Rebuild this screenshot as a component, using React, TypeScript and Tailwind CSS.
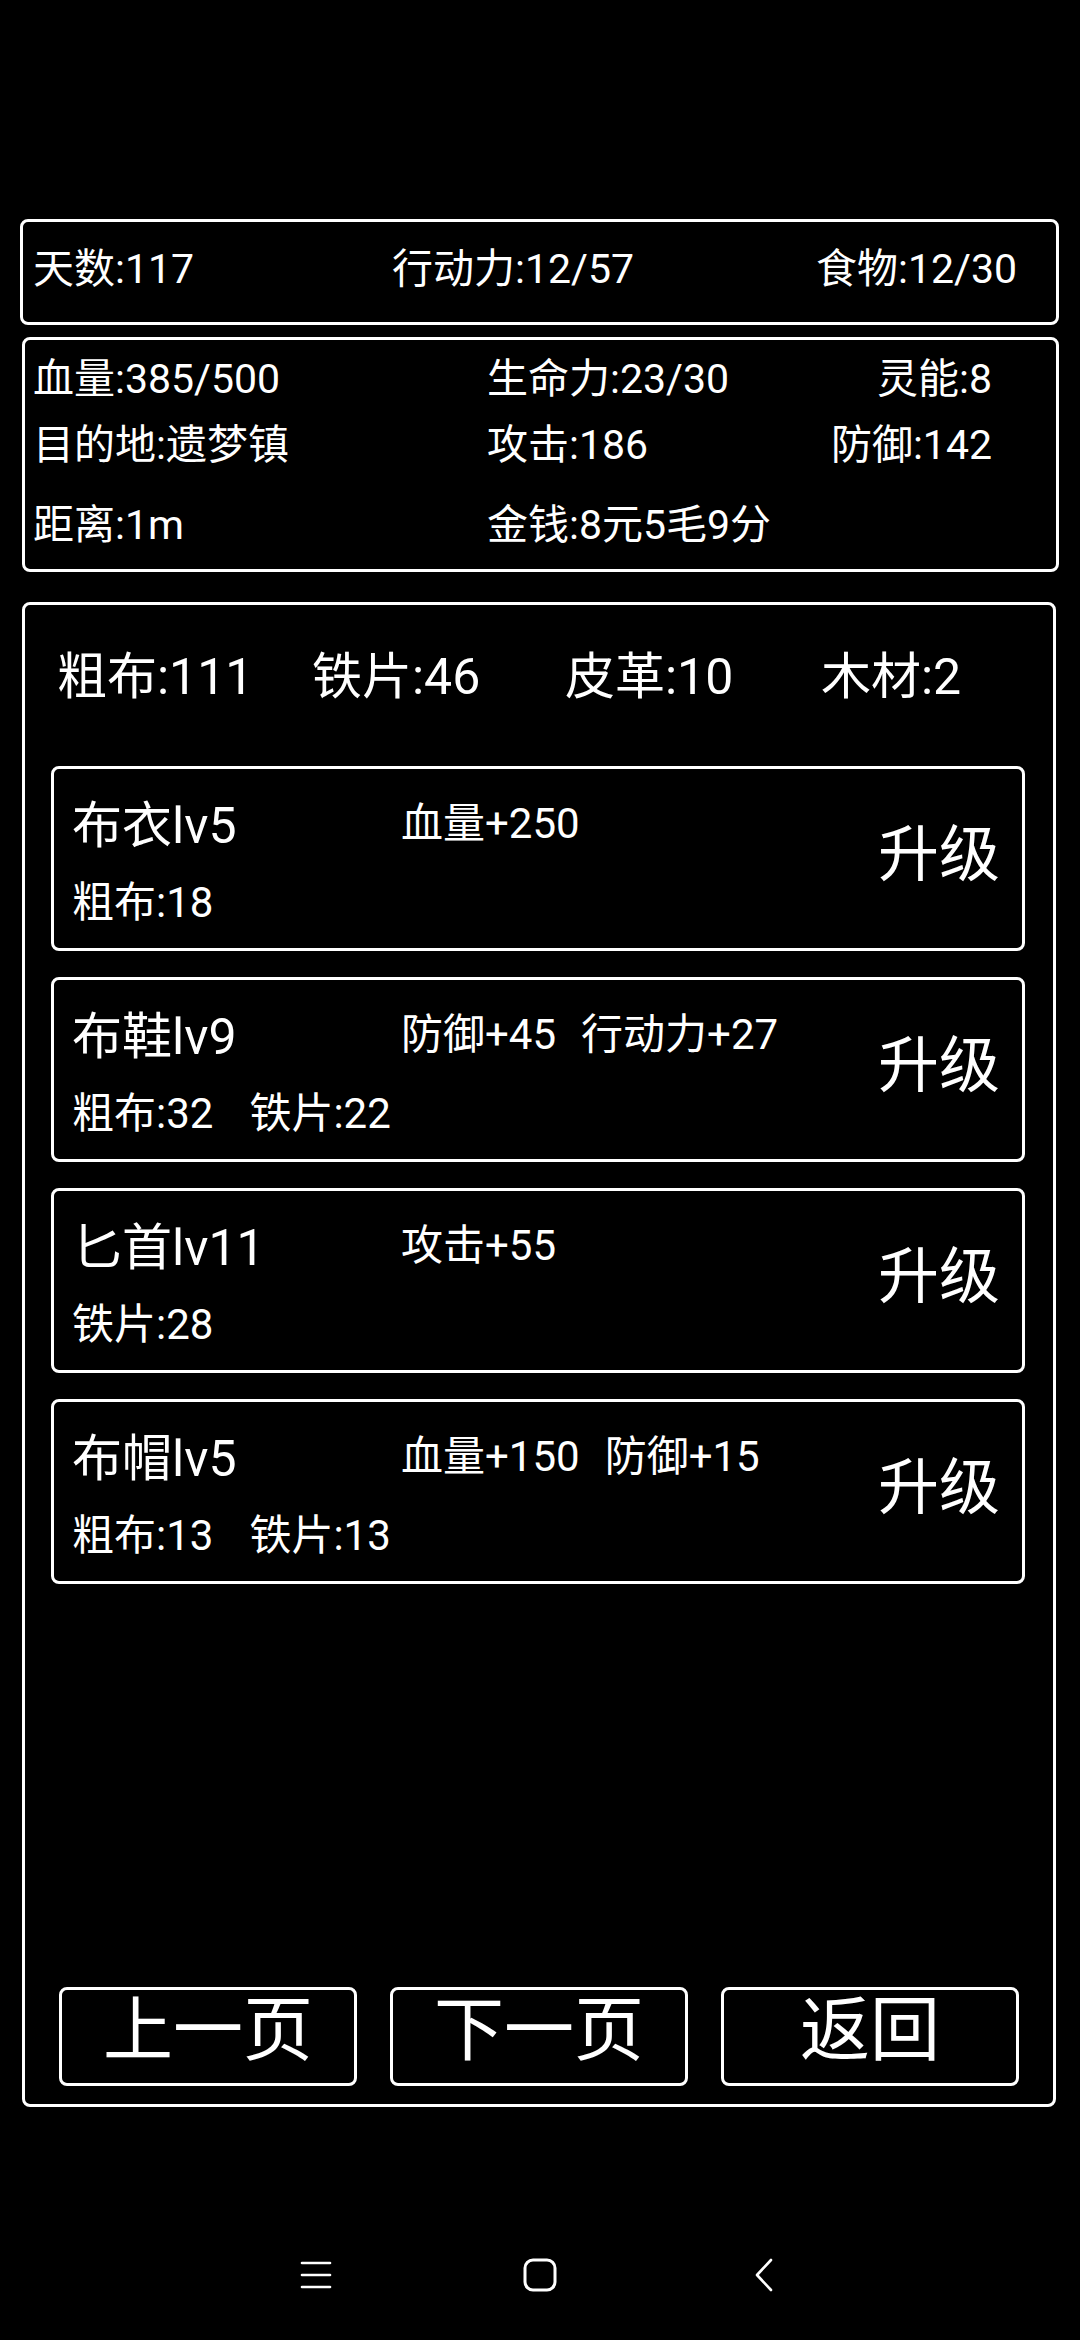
import React from "react";

const cards = [
  { name: "布衣lv5", effects: ["血量+250"], reqs: ["粗布:18"] },
  { name: "布鞋lv9", effects: ["防御+45", "行动力+27"], reqs: ["粗布:32", "铁片:22"] },
  { name: "匕首lv11", effects: ["攻击+55"], reqs: ["铁片:28"] },
  { name: "布帽lv5", effects: ["血量+150", "防御+15"], reqs: ["粗布:13", "铁片:13"] },
];

function Card({ name, effects, reqs }: { name: string; effects: string[]; reqs: string[] }) {
  return (
    <div className="h-[185px] border-[3px] border-white rounded-[8px] flex pl-[18px] pr-[22px]">
      <div className="flex-1 flex flex-col pt-[32px]">
        <div className="flex items-start">
          <span className="w-[329px] text-[50px] leading-none whitespace-nowrap">{name}</span>
          <div className="flex gap-[25px] text-[42px] leading-none mt-[2px] whitespace-nowrap">
            {effects.map((e) => (
              <span key={e}>{e}</span>
            ))}
          </div>
        </div>
        <div className="flex gap-[36px] text-[42px] leading-none mt-[31px] whitespace-nowrap">
          {reqs.map((r) => (
            <span key={r}>{r}</span>
          ))}
        </div>
      </div>
      <div className="text-[61px] leading-none pt-[56px]">升级</div>
    </div>
  );
}

export default function App() {
  return (
    <div className="w-[1080px] h-[2340px] bg-black text-white font-['Roboto','Noto_Sans_CJK_SC',sans-serif] pt-[219px] overflow-hidden">
      {/* Box 1 */}
      <div className="ml-[20px] w-[1039px] h-[106px] border-[3px] border-white rounded-[8px] flex pl-[10px] pt-[27px] text-[41px] leading-none whitespace-nowrap">
        <span className="w-[359px]">天数:117</span>
        <span className="w-[424px]">行动力:12/57</span>
        <span>食物:12/30</span>
      </div>

      {/* Box 2 */}
      <div className="mt-[12px] ml-[22px] w-[1037px] h-[235px] border-[3px] border-white rounded-[8px] flex flex-col pl-[8px] pr-[64px] pt-[19px] text-[41px] leading-none whitespace-nowrap">
        <div className="flex">
          <span className="w-[454px]">血量:385/500</span>
          <span className="flex-1">生命力:23/30</span>
          <span>灵能:8</span>
        </div>
        <div className="flex mt-[25px]">
          <span className="w-[454px]">目的地:遗梦镇</span>
          <span className="flex-1">攻击:186</span>
          <span>防御:142</span>
        </div>
        <div className="flex mt-[39px]">
          <span className="w-[454px]">距离:1m</span>
          <span className="flex-1">金钱:8元5毛9分</span>
        </div>
      </div>

      {/* Box 3 */}
      <div className="mt-[30px] ml-[22px] w-[1034px] h-[1505px] border-[3px] border-white rounded-[8px] flex flex-col pb-[18px]">
        <div className="flex pl-[32px] pt-[47px] text-[50px] leading-none whitespace-nowrap">
          <span className="w-[255px]">粗布:111</span>
          <span className="w-[253px]">铁片:46</span>
          <span className="w-[256px]">皮革:10</span>
          <span>木材:2</span>
        </div>
        <div className="mt-[64px] ml-[26px] w-[974px] flex flex-col gap-[26px]">
          {cards.map((c) => (
            <Card key={c.name} {...c} />
          ))}
        </div>
        <div className="mt-auto ml-[34px] grid grid-cols-[298px_298px_298px] gap-[33px]">
          {["上一页", "下一页", "返回"].map((t) => (
            <div
              key={t}
              className="h-[99px] border-[3px] border-white rounded-[8px] flex justify-center items-start pt-[6px] text-[70px] leading-none whitespace-nowrap"
            >
              {t}
            </div>
          ))}
        </div>
      </div>

      {/* Nav bar */}
      <div className="mt-[148px] flex justify-center gap-[184px] h-[40px]">
        <div className="w-[40px] h-[40px] flex items-center justify-center">
          <svg width="32" height="30" viewBox="0 0 32 30" fill="none" stroke="white" strokeWidth="2.6" strokeLinecap="round">
            <line x1="2" y1="3" x2="30" y2="3" />
            <line x1="2" y1="15" x2="30" y2="15" />
            <line x1="2" y1="27" x2="30" y2="27" />
          </svg>
        </div>
        <div className="w-[40px] h-[40px] flex items-center justify-center">
          <svg width="34" height="34" viewBox="0 0 34 34" fill="none" stroke="white" strokeWidth="3">
            <rect x="2" y="2" width="30" height="30" rx="8" />
          </svg>
        </div>
        <div className="w-[40px] h-[40px] flex items-center justify-center">
          <svg width="22" height="34" viewBox="0 0 22 34" fill="none" stroke="white" strokeWidth="2.6" strokeLinecap="round" strokeLinejoin="round">
            <polyline points="18,2 4,17 18,32" />
          </svg>
        </div>
      </div>
    </div>
  );
}
